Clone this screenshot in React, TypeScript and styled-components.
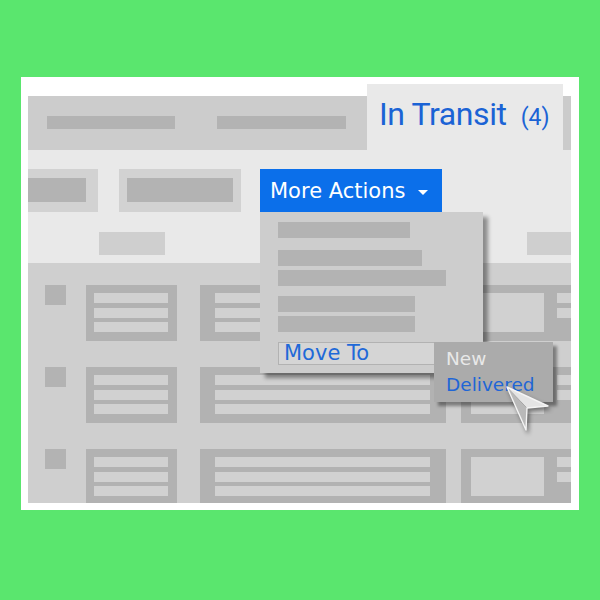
import React from 'react';
import styled, {createGlobalStyle} from 'styled-components';

const GlobalStyle = createGlobalStyle`
html, body {
margin: 0;
padding: 0;
}
body {
background: #5ae66e;
font-family: "DejaVu Sans", sans-serif;
}
`;

const ROWS = [1, 2, 3];

export default function App() {
    return (
        <>
            <GlobalStyle/>
            <Stage>
                <Frame>
                    <Header>
                        <TabStrip>
                            <Placeholder $w={128}/>
                            <Placeholder $w={129}/>
                        </TabStrip>
                        <ActiveTab>
                            <TabTitle>In Transit</TabTitle>
                            <TabCount>(4)</TabCount>
                        </ActiveTab>
                        <TabEdge/>
                    </Header>

                    <Toolbar>
                        <ToolRow>
                            <ToolBox $pad="9px 12px 10px 0"><ToolFill $w={58}/></ToolBox>
                            <ToolBox $pad="9px 8px 10px 8px" $ml={21}><ToolFill $w={106}/></ToolBox>
                            <ActionsWrap>
                                <ActionsButton>
                                    More Actions
                                    <Caret/>
                                </ActionsButton>
                                <Dropdown>
                                    <MenuGroup $mt={0}>
                                        <MenuBar $w={132}/>
                                    </MenuGroup>
                                    <MenuGroup $mt={12}>
                                        <MenuBar $w={144}/>
                                        <MenuBar $w={168}/>
                                    </MenuGroup>
                                    <MenuGroup $mt={10}>
                                        <MenuBar $w={137}/>
                                        <MenuBar $w={137}/>
                                    </MenuGroup>
                                    <MoveItem>Move To</MoveItem>
                                    <Submenu>
                                        <SubItem>New</SubItem>
                                        <SubItem $active>Delivered</SubItem>
                                        <Pointer/>
                                    </Submenu>
                                </Dropdown>
                            </ActionsWrap>
                        </ToolRow>
                        <FilterRow>
                            <FilterChip $w={66}/>
                            <FilterChip $w={44} $push/>
                        </FilterRow>
                    </Toolbar>

                    <Table>
                        {ROWS.map(r => (
                            <Row key={r}>
                                <Checkbox/>
                                <NameCell>
                                    <CellLine/>
                                    <CellLine/>
                                    <CellLine/>
                                </NameCell>
                                <DetailCell>
                                    <CellLine/>
                                    <CellLine/>
                                    <CellLine/>
                                </DetailCell>
                                <PreviewCell>
                                    <Thumb/>
                                    <PreviewLines>
                                        <CellLine/>
                                        <CellLine/>
                                    </PreviewLines>
                                </PreviewCell>
                            </Row>
                        ))}
                    </Table>
                </Frame>
            </Stage>
        </>
    );
}

const Pointer = () => (
    <PointerSvg width="50" height="50" viewBox="0 0 50 50">
        <polygon points="2,2 43,21 22,23" fill="#e4e4e4"/>
        <polygon points="2,2 22,23 21,45" fill="#b9b9b9"/>
        <polygon points="2,2 43,21 22,23 21,45" fill="none" stroke="#f4f4f4" strokeWidth="1.4"
                 strokeLinejoin="round"/>
    </PointerSvg>
);

const Stage = styled.div`
width: 600px;
height: 600px;
padding-top: 77px;
box-sizing: border-box;
`;

const Frame = styled.div`
width: 558px;
margin-left: 21px;
padding: 7px 8px 7px 7px;
box-sizing: border-box;
background: #ffffff;
display: flex;
flex-direction: column;
`;

const Header = styled.div`
display: flex;
height: 66px;
`;

const TabStrip = styled.div`
width: 339px;
margin-top: 12px;
background: #cccccc;
display: flex;
align-items: flex-start;
gap: 42px;
padding: 20px 0 0 19px;
box-sizing: border-box;
`;

const Placeholder = styled.div<{ $w: number }>`
width: ${p => p.$w}px;
height: 13px;
background: #b3b3b3;
`;

const ActiveTab = styled.div`
width: 196px;
background: #e9e9e9;
display: flex;
align-items: baseline;
gap: 14px;
padding: 14px 0 0 12px;
box-sizing: border-box;
color: #1b63d5;
font-family: Roboto, "Liberation Sans", sans-serif;
`;

const TabTitle = styled.span`
font-size: 32px;
line-height: 32px;
letter-spacing: -0.4px;
`;

const TabCount = styled.span`
font-size: 23px;
`;

const TabEdge = styled.div`
width: 8px;
margin-top: 12px;
background: #cbcbcb;
`;

const Toolbar = styled.div`
height: 113px;
background: #e9e9e9;
padding-top: 19px;
box-sizing: border-box;
display: flex;
flex-direction: column;
gap: 20px;
`;

const ToolRow = styled.div`
display: flex;
align-items: flex-start;
`;

const ToolBox = styled.div<{ $pad: string; $ml?: number }>`
background: #d2d2d2;
padding: ${p => p.$pad};
margin-left: ${p => p.$ml || 0}px;
`;

const ToolFill = styled.div<{ $w: number }>`
width: ${p => p.$w}px;
height: 24px;
background: #b3b3b3;
`;

const ActionsWrap = styled.div`
position: relative;
margin-left: 19px;
z-index: 2;
`;

const ActionsButton = styled.div`
width: 182px;
height: 43px;
box-sizing: border-box;
padding-left: 10px;
background: #0b6fea;
color: #ffffff;
font-size: 21px;
display: flex;
align-items: center;
`;

const Caret = styled.span`
margin-left: 13px;
margin-top: 3px;
border-left: 5px solid transparent;
border-right: 5px solid transparent;
border-top: 5px solid #ffffff;
`;

const Dropdown = styled.div`
position: absolute;
top: 100%;
left: 0;
width: 223px;
box-sizing: border-box;
padding: 10px 0 8px 18px;
background: #cdcdcd;
box-shadow: 5px 5px 4px rgba(0, 0, 0, 0.4);
display: flex;
flex-direction: column;
`;

const MenuGroup = styled.div<{ $mt: number }>`
display: flex;
flex-direction: column;
gap: 4px;
margin-top: ${p => p.$mt}px;
`;

const MenuBar = styled.div<{ $w: number }>`
width: ${p => p.$w}px;
height: 16px;
background: #b3b3b3;
`;

const MoveItem = styled.div`
margin-top: 10px;
width: 160px;
height: 23px;
box-sizing: border-box;
border: 1px solid #b2b2b2;
background: #d5d5d5;
padding-left: 5px;
color: #1f69d8;
font-size: 21px;
line-height: 21px;
`;

const Submenu = styled.div`
position: absolute;
left: 174px;
top: 130px;
width: 119px;
height: 60px;
box-sizing: border-box;
padding: 4px 0 0 12px;
background: #ababab;
box-shadow: 4px 4px 3px rgba(0, 0, 0, 0.4);
`;

const SubItem = styled.div<{ $active?: boolean }>`
font-size: 18.5px;
line-height: 26px;
color: ${p => p.$active ? '#1f66d6' : '#e8e8e8'};
`;

const PointerSvg = styled.svg`
position: absolute;
left: 71px;
top: 43px;
filter: drop-shadow(2px 3px 2px rgba(0, 0, 0, 0.45));
`;

const FilterRow = styled.div`
display: flex;
padding-left: 71px;
`;

const FilterChip = styled.div<{ $w: number; $push?: boolean }>`
width: ${p => p.$w}px;
height: 23px;
background: #cfcfcf;
margin-left: ${p => p.$push ? 'auto' : '0'};
`;

const Table = styled.div`
height: 240px;
box-sizing: border-box;
padding-top: 22px;
background: #cfcfcf;
overflow: hidden;
display: flex;
flex-direction: column;
gap: 26px;
`;

const Row = styled.div`
display: flex;
align-items: flex-start;
padding-left: 17px;
flex-shrink: 0;
`;

const Checkbox = styled.div`
width: 21px;
height: 20px;
flex-shrink: 0;
background: #b3b3b3;
`;

const CellLine = styled.div`
height: 10px;
background: #d1d1d1;
`;

const NameCell = styled.div`
margin-left: 20px;
width: 91px;
flex-shrink: 0;
box-sizing: border-box;
padding: 8px 9px 9px 8px;
background: #b2b2b2;
display: flex;
flex-direction: column;
gap: 4.5px;
`;

const DetailCell = styled(NameCell)`
margin-left: 23px;
width: 246px;
padding: 8px 16px 9px 15px;
`;

const PreviewCell = styled.div`
margin-left: 15px;
width: 130px;
flex-shrink: 0;
box-sizing: border-box;
padding: 8px 0 9px 10px;
background: #b2b2b2;
display: flex;
`;

const Thumb = styled.div`
width: 73px;
height: 39px;
background: #d1d1d1;
`;

const PreviewLines = styled.div`
margin-left: 13px;
flex: 1;
display: flex;
flex-direction: column;
gap: 4.5px;
`;
